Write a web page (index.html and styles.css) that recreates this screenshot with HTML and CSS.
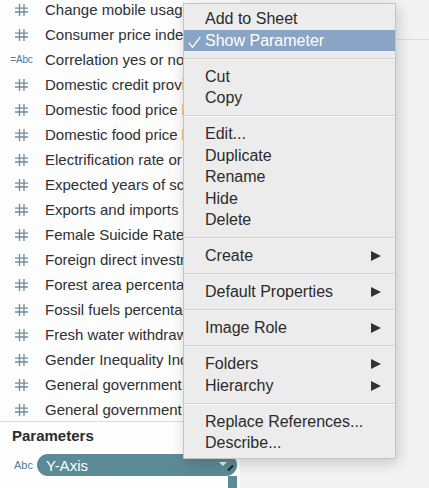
FILE: index.html
```html
<!DOCTYPE html>
<html>
<head>
<meta charset="utf-8">
<link rel="stylesheet" href="styles.css">
</head>
<body>
<div class="app">
  <div class="datapane">
    <div class="fields">
      <div class="row"><span class="ic"><svg class="hash" viewBox="0 0 13 12" width="13" height="12"><path d="M4.5 0V12M9 0V12M0 4.2H13M0 8H13"/></svg></span><span class="name">Change mobile usage</span></div>
      <div class="row"><span class="ic"><svg class="hash" viewBox="0 0 13 12" width="13" height="12"><path d="M4.5 0V12M9 0V12M0 4.2H13M0 8H13"/></svg></span><span class="name">Consumer price index</span></div>
      <div class="row"><span class="ic"><span class="abc">=Abc</span></span><span class="name">Correlation yes or no</span></div>
      <div class="row"><span class="ic"><svg class="hash" viewBox="0 0 13 12" width="13" height="12"><path d="M4.5 0V12M9 0V12M0 4.2H13M0 8H13"/></svg></span><span class="name">Domestic credit provided by financial sector</span></div>
      <div class="row"><span class="ic"><svg class="hash" viewBox="0 0 13 12" width="13" height="12"><path d="M4.5 0V12M9 0V12M0 4.2H13M0 8H13"/></svg></span><span class="name">Domestic food price level index</span></div>
      <div class="row"><span class="ic"><svg class="hash" viewBox="0 0 13 12" width="13" height="12"><path d="M4.5 0V12M9 0V12M0 4.2H13M0 8H13"/></svg></span><span class="name">Domestic food price level volatility</span></div>
      <div class="row"><span class="ic"><svg class="hash" viewBox="0 0 13 12" width="13" height="12"><path d="M4.5 0V12M9 0V12M0 4.2H13M0 8H13"/></svg></span><span class="name">Electrification rate or population</span></div>
      <div class="row"><span class="ic"><svg class="hash" viewBox="0 0 13 12" width="13" height="12"><path d="M4.5 0V12M9 0V12M0 4.2H13M0 8H13"/></svg></span><span class="name">Expected years of schooling</span></div>
      <div class="row"><span class="ic"><svg class="hash" viewBox="0 0 13 12" width="13" height="12"><path d="M4.5 0V12M9 0V12M0 4.2H13M0 8H13"/></svg></span><span class="name">Exports and imports percentage GDP</span></div>
      <div class="row"><span class="ic"><svg class="hash" viewBox="0 0 13 12" width="13" height="12"><path d="M4.5 0V12M9 0V12M0 4.2H13M0 8H13"/></svg></span><span class="name">Female Suicide Rate 100k people</span></div>
      <div class="row"><span class="ic"><svg class="hash" viewBox="0 0 13 12" width="13" height="12"><path d="M4.5 0V12M9 0V12M0 4.2H13M0 8H13"/></svg></span><span class="name">Foreign direct investment</span></div>
      <div class="row"><span class="ic"><svg class="hash" viewBox="0 0 13 12" width="13" height="12"><path d="M4.5 0V12M9 0V12M0 4.2H13M0 8H13"/></svg></span><span class="name">Forest area percentage</span></div>
      <div class="row"><span class="ic"><svg class="hash" viewBox="0 0 13 12" width="13" height="12"><path d="M4.5 0V12M9 0V12M0 4.2H13M0 8H13"/></svg></span><span class="name">Fossil fuels percentage</span></div>
      <div class="row"><span class="ic"><svg class="hash" viewBox="0 0 13 12" width="13" height="12"><path d="M4.5 0V12M9 0V12M0 4.2H13M0 8H13"/></svg></span><span class="name">Fresh water withdrawals</span></div>
      <div class="row"><span class="ic"><svg class="hash" viewBox="0 0 13 12" width="13" height="12"><path d="M4.5 0V12M9 0V12M0 4.2H13M0 8H13"/></svg></span><span class="name">Gender Inequality Index</span></div>
      <div class="row"><span class="ic"><svg class="hash" viewBox="0 0 13 12" width="13" height="12"><path d="M4.5 0V12M9 0V12M0 4.2H13M0 8H13"/></svg></span><span class="name">General government final consumption</span></div>
      <div class="row"><span class="ic"><svg class="hash" viewBox="0 0 13 12" width="13" height="12"><path d="M4.5 0V12M9 0V12M0 4.2H13M0 8H13"/></svg></span><span class="name">General government total expenditure</span></div>
    </div>
    <div class="params">
      <div class="params-title">Parameters</div>
      <div class="param-row">
        <span class="pabc">Abc</span>
        <div class="pill"><span class="pill-text">Y-Axis</span><span class="caret"></span></div>
      </div>
      <div class="pill-tail"></div>
    </div>
  </div>
  <div class="sheet">
    <div class="shelf"></div>
  </div>
</div>

<div class="menu">
  <div class="item">Add to Sheet</div>
  <div class="item active"><svg class="check" viewBox="0 0 13 12" width="13" height="12"><path d="M0.8 6.6L4.6 11.2L12.4 0.8"/></svg>Show Parameter</div>
  <div class="sep"></div>
  <div class="item">Cut</div>
  <div class="item">Copy</div>
  <div class="sep"></div>
  <div class="item">Edit...</div>
  <div class="item">Duplicate</div>
  <div class="item">Rename</div>
  <div class="item">Hide</div>
  <div class="item">Delete</div>
  <div class="sep"></div>
  <div class="item sub">Create<span class="arrow"></span></div>
  <div class="sep"></div>
  <div class="item sub">Default Properties<span class="arrow"></span></div>
  <div class="sep"></div>
  <div class="item sub">Image Role<span class="arrow"></span></div>
  <div class="sep"></div>
  <div class="item sub">Folders<span class="arrow"></span></div>
  <div class="item sub">Hierarchy<span class="arrow"></span></div>
  <div class="sep"></div>
  <div class="item">Replace References...</div>
  <div class="item">Describe...</div>
</div>
</body>
</html>
```

FILE: styles.css
```css
html, body {
  margin: 0;
  padding: 0;
}
body {
  width: 429px;
  height: 488px;
  overflow: hidden;
  font-family: "Liberation Sans", Arial, sans-serif;
  color: #2b2b2b;
  background: #f3f3f3;
  position: relative;
}
.app {
  display: flex;
  height: 488px;
}
.datapane {
  width: 240px;
  background: #fdfdfd;
  display: flex;
  flex-direction: column;
  overflow: hidden;
}
.fields {
  height: 422px;
  overflow: hidden;
}
.row {
  display: flex;
  align-items: center;
  height: 25px;
  white-space: nowrap;
  font-size: 15px;
  color: #2e3033;
}
.row:first-child {
  margin-top: -3px;
}
.ic {
  width: 45px;
  flex: none;
  display: flex;
  align-items: center;
  justify-content: center;
  padding-right: 1px;
  box-sizing: border-box;
}
.hash {
  display: block;
  margin-left: -2px;
}
.hash path {
  stroke: #6f8c9e;
  stroke-width: 1.3;
  fill: none;
}
.abc {
  font-size: 10px;
  color: #4f7aa0;
  margin-left: -1px;
  letter-spacing: -0.2px;
}
.name {
  display: block;
  width: 138px;
  overflow: hidden;
}
.params {
  border-top: 1px solid #dcdcdc;
  flex: 1;
  background: #fefefe;
}
.params-title {
  font-size: 15px;
  font-weight: bold;
  color: #2b2b2b;
  padding-left: 12px;
  height: 28px;
  line-height: 28px;
}
.param-row {
  display: flex;
  align-items: center;
  margin-top: 4px;
  height: 22px;
}
.pabc {
  width: 37px;
  padding-left: 14px;
  box-sizing: border-box;
  font-size: 11px;
  color: #4d7ca0;
}
.pill {
  position: relative;
  width: 200px;
  height: 22px;
  border-radius: 11px;
  background: #5c8a96;
  display: flex;
  align-items: center;
  box-sizing: border-box;
  padding-left: 9px;
}
.pill::after {
  content: "";
  position: absolute;
  left: 190px;
  top: 13px;
  width: 7px;
  height: 2px;
  background: #222;
  transform: rotate(-45deg);
}
.pill-text {
  color: #fff;
  font-size: 15px;
  flex: 1;
}
.caret {
  width: 0;
  height: 0;
  border-left: 4px solid transparent;
  border-right: 4px solid transparent;
  border-top: 4px solid #e6eef0;
  margin-right: 10px;
  margin-top: -3px;
}
.pill-tail {
  margin-left: 228px;
  width: 9px;
  height: 12px;
  background: #5c8a96;
}
.sheet {
  flex: 1;
  background: #f3f3f3;
}
.shelf {
  height: 39px;
  border-bottom: 1px solid #dadada;
}
.menu {
  position: absolute;
  left: 183px;
  top: 3px;
  width: 213px;
  box-sizing: border-box;
  background: #ececec;
  border: 1px solid #c4c4c4;
  padding: 4px 0;
  box-shadow: 2px 4px 14px rgba(0, 0, 0, 0.18);
  font-size: 16px;
  color: #2b2b2b;
}
.item {
  position: relative;
  height: 21.5px;
  line-height: 21.5px;
  padding-left: 21px;
  white-space: nowrap;
}
.item.active {
  background: #89a4c4;
  color: #fff;
}
.check {
  position: absolute;
  left: 4px;
  top: 6px;
}
.check path {
  stroke: #fff;
  stroke-width: 1.3;
  fill: none;
}
.arrow {
  position: absolute;
  right: 14px;
  top: 6px;
  width: 0;
  height: 0;
  border-left: 10px solid #333;
  border-top: 5px solid transparent;
  border-bottom: 5px solid transparent;
}
.sep {
  height: 1px;
  background: #d2d2d2;
  margin: 6.5px 0 6px;
  border-bottom: 1px solid #f6f6f6;
}
```
